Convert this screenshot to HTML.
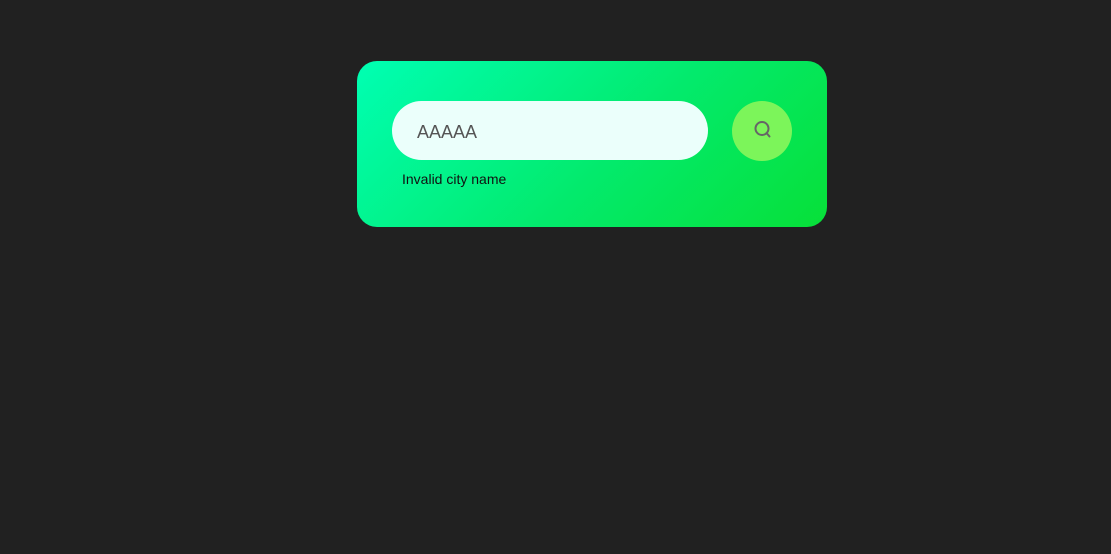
<!DOCTYPE html>
<html><head><meta charset="utf-8"><style>
html,body{margin:0;padding:0;background:#212121;width:1111px;height:554px;overflow:hidden;font-family:"Liberation Sans",Arial,sans-serif}
.card{position:absolute;left:357px;top:61px;width:470px;height:166px;border-radius:20px;background:linear-gradient(135deg,#00ffb3 0%,#03ea6c 55%,#07e038 100%)}
.inp{position:absolute;left:35px;top:40px;width:316px;height:59px;border-radius:30px;background:#ebfffb}
.inp span{position:absolute;left:25px;top:20px;font-size:18px;color:#555;line-height:22px}
.btn{position:absolute;left:375px;top:40px;width:60px;height:60px;border-radius:50%;background:#7cf55a}
.btn svg{position:absolute;left:20px;top:18px}
.err{position:absolute;left:45px;top:110px;font-size:14px;color:#111}
</style></head><body>
<div class="card">
<div class="inp"><span>AAAAA</span></div>
<div class="btn"><svg width="22" height="22" viewBox="0 0 22 22"><circle cx="10" cy="9.5" r="6.5" fill="none" stroke="#666" stroke-width="2"/><path d="M14.5 14 L17.5 17.5" stroke="#666" stroke-width="2" stroke-linecap="round"/></svg></div>
<div class="err">Invalid city name</div>
</div>
</body></html>
